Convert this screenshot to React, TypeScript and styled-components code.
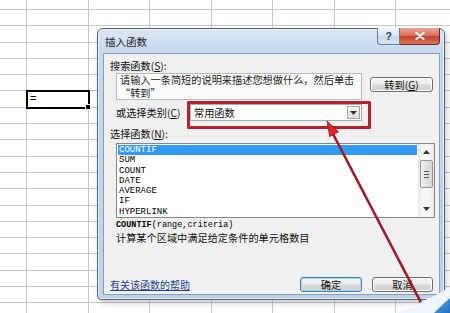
import styled, { createGlobalStyle } from "styled-components";

const GlobalStyle = createGlobalStyle`
  html, body {
    margin: 0;
    padding: 0;
  }
  body {
    width: 450px;
    height: 313px;
    overflow: hidden;
    background: #fff;
    font-family: "Noto Sans CJK SC", "Liberation Sans", sans-serif;
  }
`;

const COLS = 8;
const ROWS = 20;
const ACTIVE_ROW = 6;
const ACTIVE_COL = 1;

const functions = ["COUNTIF", "SUM", "COUNT", "DATE", "AVERAGE", "IF", "HYPERLINK"];

const Screen = styled.div`
  position: relative;
  width: 450px;
  height: 313px;
  overflow: hidden;
  background: #fff;
`;

const Sheet = styled.div`
  display: grid;
  grid-template-columns: 27px repeat(7, 61.5px);
  grid-template-rows: 10px repeat(19, 16.3px);
`;

const Cell = styled.div<{ $active?: boolean }>`
  box-sizing: border-box;
  border-right: 1px solid #c8c8c8;
  border-bottom: 1px solid #c8c8c8;
  font-family: "Liberation Sans", sans-serif;
  font-size: 11px;
  line-height: 15px;
  padding-left: 3px;
  color: #000;
  ${(p) =>
    p.$active &&
    `
    position: relative;
    z-index: 1;
    outline: 2px solid #000;
    outline-offset: -1px;
    &::after {
      content: "";
      position: absolute;
      right: -3px;
      bottom: -3px;
      width: 4px;
      height: 4px;
      background: #000;
      border: 1px solid #fff;
    }
  `}
`;

const Dialog = styled.div`
  position: absolute;
  left: 97px;
  top: 28px;
  width: 348px;
  height: 272px;
  box-sizing: border-box;
  display: flex;
  flex-direction: column;
  padding: 0 4px 4px 5px;
  border: 1px solid #54657a;
  border-radius: 6px 6px 4px 4px;
  background: linear-gradient(#dbe7f5, #c6d8ee 24px, #bcd0ea);
  box-shadow: inset 0 0 0 1px rgba(255, 255, 255, 0.55), 2px 3px 6px rgba(0, 0, 0, 0.2);
`;

const TitleBar = styled.div`
  height: 24px;
  display: flex;
  align-items: flex-start;
  padding-left: 2px;
`;

const Title = styled.div`
  flex: 1;
  padding-top: 6px;
  font-size: 10.5px;
  line-height: 14px;
  color: #1e1e1e;
`;

const CaptionButton = styled.div<{ $close?: boolean }>`
  box-sizing: border-box;
  height: 17px;
  margin-top: -1px;
  display: flex;
  align-items: center;
  justify-content: center;
  width: ${(p) => (p.$close ? "40px" : "23px")};
  border: 1px solid ${(p) => (p.$close ? "#6e2a1f" : "#6a7d93")};
  border-top: none;
  border-radius: ${(p) => (p.$close ? "0 0 4px 0" : "0 0 0 4px")};
  border-left-width: ${(p) => (p.$close ? "0" : "1px")};
  background: ${(p) =>
    p.$close
      ? "linear-gradient(#e9a797, #d8735e 45%, #c4412b 55%, #d67a63)"
      : "linear-gradient(#f1f5fa, #dae4f0 50%, #c7d6e8 50%, #d8e4f1)"};
  color: #33475e;
  font-family: "Liberation Sans", sans-serif;
  font-weight: bold;
  font-size: 11px;
`;

const Client = styled.div`
  flex: 1;
  display: flex;
  flex-direction: column;
  background: #f0f0f0;
  border: 1px solid #8a9fb8;
  padding: 5px 0 2px 0;
`;

const Label = styled.div<{ $indent?: number; $top?: number }>`
  font-size: 10.2px;
  line-height: 13px;
  color: #111;
  padding-left: ${(p) => p.$indent ?? 6}px;
  margin-top: ${(p) => p.$top ?? 0}px;
  white-space: nowrap;
`;

const SearchRow = styled.div`
  display: flex;
  align-items: flex-start;
  gap: 8px;
  margin-top: 1px;
  padding-left: 12px;
`;

const SearchBox = styled.div`
  box-sizing: border-box;
  width: 246px;
  height: 27px;
  padding: 0 3px;
  border: 1px solid #b6bcc6;
  background: #fbfbfb;
  font-size: 10.2px;
  line-height: 12.5px;
  color: #222;
  white-space: nowrap;
  overflow: hidden;
`;

const Button = styled.div<{ $w: number; $default?: boolean }>`
  box-sizing: border-box;
  width: ${(p) => p.$w}px;
  height: 15px;
  display: flex;
  align-items: center;
  justify-content: center;
  border: 1px solid ${(p) => (p.$default ? "#3d7fb3" : "#707070")};
  border-radius: 3px;
  background: linear-gradient(#f4f4f4, #ebebeb 48%, #dbdbdb 52%, #d0d0d0);
  box-shadow: ${(p) => (p.$default ? "inset 0 0 0 1px #a8dcf0" : "inset 0 0 0 1px #fcfcfc")};
  font-size: 10.2px;
  color: #111;
  white-space: nowrap;
`;

const GoButton = styled(Button)`
  margin-top: 4px;
`;

const CategoryRow = styled.div`
  display: flex;
  align-items: center;
  margin-top: 4px;
  padding-left: 12px;
`;

const CategoryLabel = styled.div`
  width: 74px;
  font-size: 10.2px;
  line-height: 13px;
  color: #111;
  white-space: nowrap;
`;

const Select = styled.div`
  position: relative;
  box-sizing: border-box;
  width: 172px;
  height: 17px;
  display: flex;
  align-items: center;
  padding-left: 3px;
  border: 1px solid #a5acb5;
  background: #fff;
  font-size: 10.2px;
  color: #111;

  &::after {
    content: "";
    position: absolute;
    inset: -4px -10px -9px -4px;
    border: 3px solid #b3242c;
    border-radius: 1px;
    pointer-events: none;
  }
`;

const DropButton = styled.div`
  box-sizing: border-box;
  margin-left: auto;
  margin-right: 1px;
  width: 13px;
  height: 13px;
  display: flex;
  align-items: center;
  justify-content: center;
  border: 1px solid #a3a3a3;
  background: linear-gradient(#f5f5f5, #dcdcdc);
`;

const ListBox = styled.div`
  box-sizing: border-box;
  display: flex;
  width: 319px;
  height: 75px;
  margin: 3px 0 0 12px;
  border: 1px solid #828790;
  background: #fff;
`;

const Items = styled.div`
  flex: 1;
  padding: 1px 1px 0 1px;
  overflow: hidden;
`;

const Item = styled.div<{ $selected?: boolean }>`
  height: 10.25px;
  padding-left: 1px;
  font-family: "Liberation Mono", monospace;
  font-size: 9px;
  line-height: 10.25px;
  color: ${(p) => (p.$selected ? "#fff" : "#000")};
  background: ${(p) => (p.$selected ? "#3399ff" : "transparent")};
`;

const ScrollBar = styled.div`
  width: 16px;
  display: flex;
  flex-direction: column;
  align-items: center;
  background: linear-gradient(90deg, #e9e9e9, #f6f6f6 30%, #f6f6f6 70%, #e9e9e9);
`;

const ScrollArrow = styled.div`
  height: 16px;
  display: flex;
  align-items: center;
  justify-content: center;
`;

const Thumb = styled.div`
  box-sizing: border-box;
  width: 13px;
  height: 28px;
  display: flex;
  flex-direction: column;
  align-items: center;
  justify-content: center;
  gap: 2px;
  border: 1px solid #959595;
  border-radius: 2px;
  background: linear-gradient(90deg, #f3f3f3, #e2e2e2 50%, #d4d4d4);

  span {
    width: 5px;
    height: 1px;
    background: #555;
  }
`;

const Track = styled.div`
  flex: 1;
`;

const Syntax = styled.div`
  margin-top: 1px;
  padding-left: 12px;
  font-family: "Liberation Mono", monospace;
  font-size: 8.5px;
  line-height: 12px;
  color: #000;

  b {
    font-weight: bold;
  }
`;

const Description = styled.div`
  padding-left: 12px;
  font-size: 10.2px;
  line-height: 13px;
  color: #111;
`;

const Footer = styled.div`
  margin-top: auto;
  display: flex;
  align-items: center;
  gap: 10px;
  padding: 0 6px;
`;

const HelpLink = styled.a`
  margin-right: auto;
  font-size: 10px;
  line-height: 13px;
  color: #1c3f91;
  text-decoration: underline;
`;

const Overlay = styled.svg`
  position: absolute;
  left: 0;
  top: 0;
  width: 450px;
  height: 313px;
  pointer-events: none;
`;

const Arrow = ({ up }: { up?: boolean }) => (
  <svg width="7" height="4" viewBox="0 0 7 4">
    <path d={up ? "M0 4 L3.5 0 L7 4 Z" : "M0 0 L7 0 L3.5 4 Z"} fill="#333" />
  </svg>
);

const App = () => {
  const cells = [];
  for (let r = 0; r < ROWS; r++) {
    for (let c = 0; c < COLS; c++) {
      const active = r === ACTIVE_ROW && c === ACTIVE_COL;
      cells.push(
        <Cell key={`${r}-${c}`} $active={active}>
          {active ? "=" : null}
        </Cell>
      );
    }
  }

  return (
    <Screen>
      <GlobalStyle />
      <Sheet>{cells}</Sheet>

      <Dialog>
        <TitleBar>
          <Title>插入函数</Title>
          <CaptionButton>?</CaptionButton>
          <CaptionButton $close>
            <svg width="10" height="8" viewBox="0 0 10 8">
              <path d="M1.5 1 L8.5 7 M8.5 1 L1.5 7" stroke="#fff" strokeWidth="2.2" strokeLinecap="round" />
            </svg>
          </CaptionButton>
        </TitleBar>

        <Client>
          <Label>
            搜索函数(<u>S</u>):
          </Label>
          <SearchRow>
            <SearchBox>
              请输入一条简短的说明来描述您想做什么，然后单击
              <br />
              “转到”
            </SearchBox>
            <GoButton $w={63}>
              转到(<u>G</u>)
            </GoButton>
          </SearchRow>

          <CategoryRow>
            <CategoryLabel>
              或选择类别(<u>C</u>)
            </CategoryLabel>
            <Select>
              常用函数
              <DropButton>
                <Arrow />
              </DropButton>
            </Select>
          </CategoryRow>

          <Label $top={6}>
            选择函数(<u>N</u>):
          </Label>
          <ListBox>
            <Items>
              {functions.map((name, i) => (
                <Item key={name} $selected={i === 0}>
                  {name}
                </Item>
              ))}
            </Items>
            <ScrollBar>
              <ScrollArrow>
                <Arrow up />
              </ScrollArrow>
              <Thumb>
                <span />
                <span />
                <span />
              </Thumb>
              <Track />
              <ScrollArrow>
                <Arrow />
              </ScrollArrow>
            </ScrollBar>
          </ListBox>

          <Syntax>
            <b>COUNTIF</b>(range,criteria)
          </Syntax>
          <Description>计算某个区域中满足给定条件的单元格数目</Description>

          <Footer>
            <HelpLink>有关该函数的帮助</HelpLink>
            <Button $w={62} $default>
              确定
            </Button>
            <Button $w={61}>取消</Button>
          </Footer>
        </Client>
      </Dialog>

      <Overlay viewBox="0 0 450 313">
        <defs>
          <linearGradient id="swoosh" x1="0" y1="0" x2="1" y2="1">
            <stop offset="0" stopColor="#5aa8e8" />
            <stop offset="1" stopColor="#1f6fc0" />
          </linearGradient>
        </defs>
        <line x1="428" y1="316" x2="332" y2="132" stroke="#9a1d24" strokeWidth="2.6" />
        <polygon
          points="327,121 338.5,131.8 329.7,136.6"
          fill="#e3262b"
          stroke="#8c1a1f"
          strokeWidth="0.8"
        />
        <path d="M396 313 C 415 305, 434 297, 450 287 L450 313 Z" fill="#eef5fc" />
        <path d="M434 313 C 440 307, 445 302, 450 298 L450 313 Z" fill="url(#swoosh)" />
      </Overlay>
    </Screen>
  );
};

export default App;
